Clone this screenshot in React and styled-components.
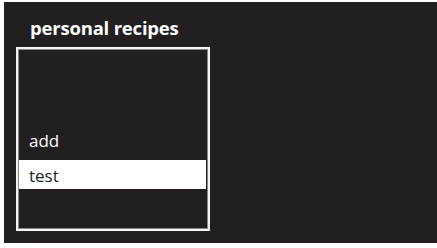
import styled, { createGlobalStyle } from 'styled-components';

const GlobalStyle = createGlobalStyle`
  html, body {
    margin: 0;
    padding: 0;
    background: #ffffff;
  }
  body {
    font-family: "Open Sans", "Noto Sans", sans-serif;
  }
`;

const Screen = styled.div`
  box-sizing: border-box;
  width: 433px;
  height: 241px;
  margin: 2px 0 0 4px;
  padding: 0 0 0 12px;
  background: #231f20;
  display: flex;
  flex-direction: column;
`;

const Title = styled.h1`
  margin: 0;
  padding: 13px 0 0 14px;
  height: 45px;
  box-sizing: border-box;
  font-size: 18.5px;
  font-weight: 700;
  line-height: 25px;
  color: #ffffff;
  letter-spacing: -0.2px;
`;

const ListBox = styled.div`
  box-sizing: border-box;
  width: 194px;
  height: 184px;
  border: 2px solid #f4f4f4;
  box-shadow: inset 0 0 0 1px #8a8788;
  padding: 76px 2px 0 1px;
  display: flex;
  flex-direction: column;
  gap: 6px;
`;

const Item = styled.div`
  height: 29px;
  display: flex;
  align-items: center;
  padding: 1px 0 0 10px;
  box-sizing: border-box;
  font-size: 17px;
  color: ${(p) => (p.$selected ? '#231f20' : '#ffffff')};
  background: ${(p) => (p.$selected ? '#ffffff' : 'transparent')};
`;

export default function App() {
  const items = ['add', 'test'];
  return (
    <>
      <GlobalStyle />
      <Screen>
        <Title>personal recipes</Title>
        <ListBox>
          {items.map((name) => (
            <Item key={name} $selected={name === 'test'}>
              {name}
            </Item>
          ))}
        </ListBox>
      </Screen>
    </>
  );
}
